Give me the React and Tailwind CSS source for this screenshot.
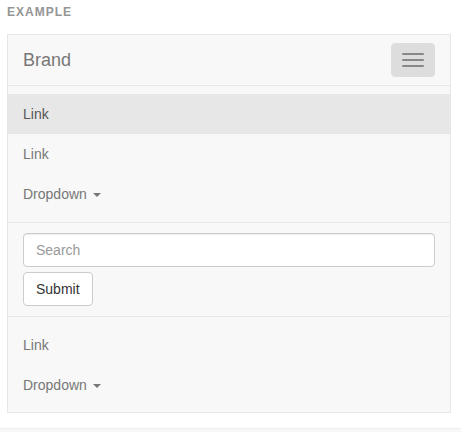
export default function App() {
  const font = { fontFamily: '"Liberation Sans", Arial, Helvetica, sans-serif' };
  const Caret = () => (
    <span className="inline-block w-0 h-0 ml-[6px] align-middle border-t-[4px] border-t-[#777] border-x-[4px] border-x-transparent"></span>
  );
  return (
    <div className="w-[461px] h-[432px] bg-white overflow-hidden text-[14px] text-[#777]" style={font}>
      <div className="pt-[4px] pl-[7px] text-[12px] leading-[17px] font-bold tracking-[1px] text-[#959595] uppercase">
        Example
      </div>
      <div className="mt-[13px] ml-[7px] w-[444px] border border-[#e7e7e7] bg-[#f8f8f8]">
        <div className="h-[50px] flex justify-between px-[15px]">
          <a className="block py-[15px] text-[18px] leading-[20px] text-[#777]">Brand</a>
          <button className="mt-[8px] h-[34px] w-[44px] py-[9px] px-[10px] bg-[#ddd] border border-[#ddd] rounded-[4px] flex flex-col gap-[4px]">
            <span className="block w-[22px] h-[2px] bg-[#888] rounded-[1px]"></span>
            <span className="block w-[22px] h-[2px] bg-[#888] rounded-[1px]"></span>
            <span className="block w-[22px] h-[2px] bg-[#888] rounded-[1px]"></span>
          </button>
        </div>
        <div className="border-t border-[#e7e7e7] px-[15px] flow-root">
          <ul className="my-[7.5px] -mx-[15px]">
            <li><a className="block py-[10px] px-[15px] leading-[20px] bg-[#e7e7e7] text-[#555]">Link</a></li>
            <li><a className="block py-[10px] px-[15px] leading-[20px]">Link</a></li>
            <li><a className="block py-[10px] px-[15px] leading-[20px]">Dropdown<Caret /></a></li>
          </ul>
          <form className="-mx-[15px] my-[8px] px-[15px] py-[10px] border-y border-[#e7e7e7]">
            <input
              type="text"
              placeholder="Search"
              className="block w-full h-[34px] px-[12px] py-[6px] text-[14px] leading-[20px] text-[#555] bg-white border border-[#ccc] rounded-[4px] shadow-[inset_0_1px_1px_rgba(0,0,0,0.075)] placeholder:text-[#999] outline-none mb-[5px]"
              style={font}
            />
            <button
              type="button"
              className="block h-[34px] px-[12px] py-[6px] text-[14px] leading-[20px] text-[#333] bg-white border border-[#ccc] rounded-[4px]"
              style={font}
            >
              Submit
            </button>
          </form>
          <ul className="my-[7.5px] -mx-[15px]">
            <li><a className="block py-[10px] px-[15px] leading-[20px]">Link</a></li>
            <li><a className="block py-[10px] px-[15px] leading-[20px]">Dropdown<Caret /></a></li>
          </ul>
        </div>
      </div>
      <div className="mt-[15px] h-[40px] bg-[#f7f7f9] border-t border-[#efefef]"></div>
    </div>
  );
}
